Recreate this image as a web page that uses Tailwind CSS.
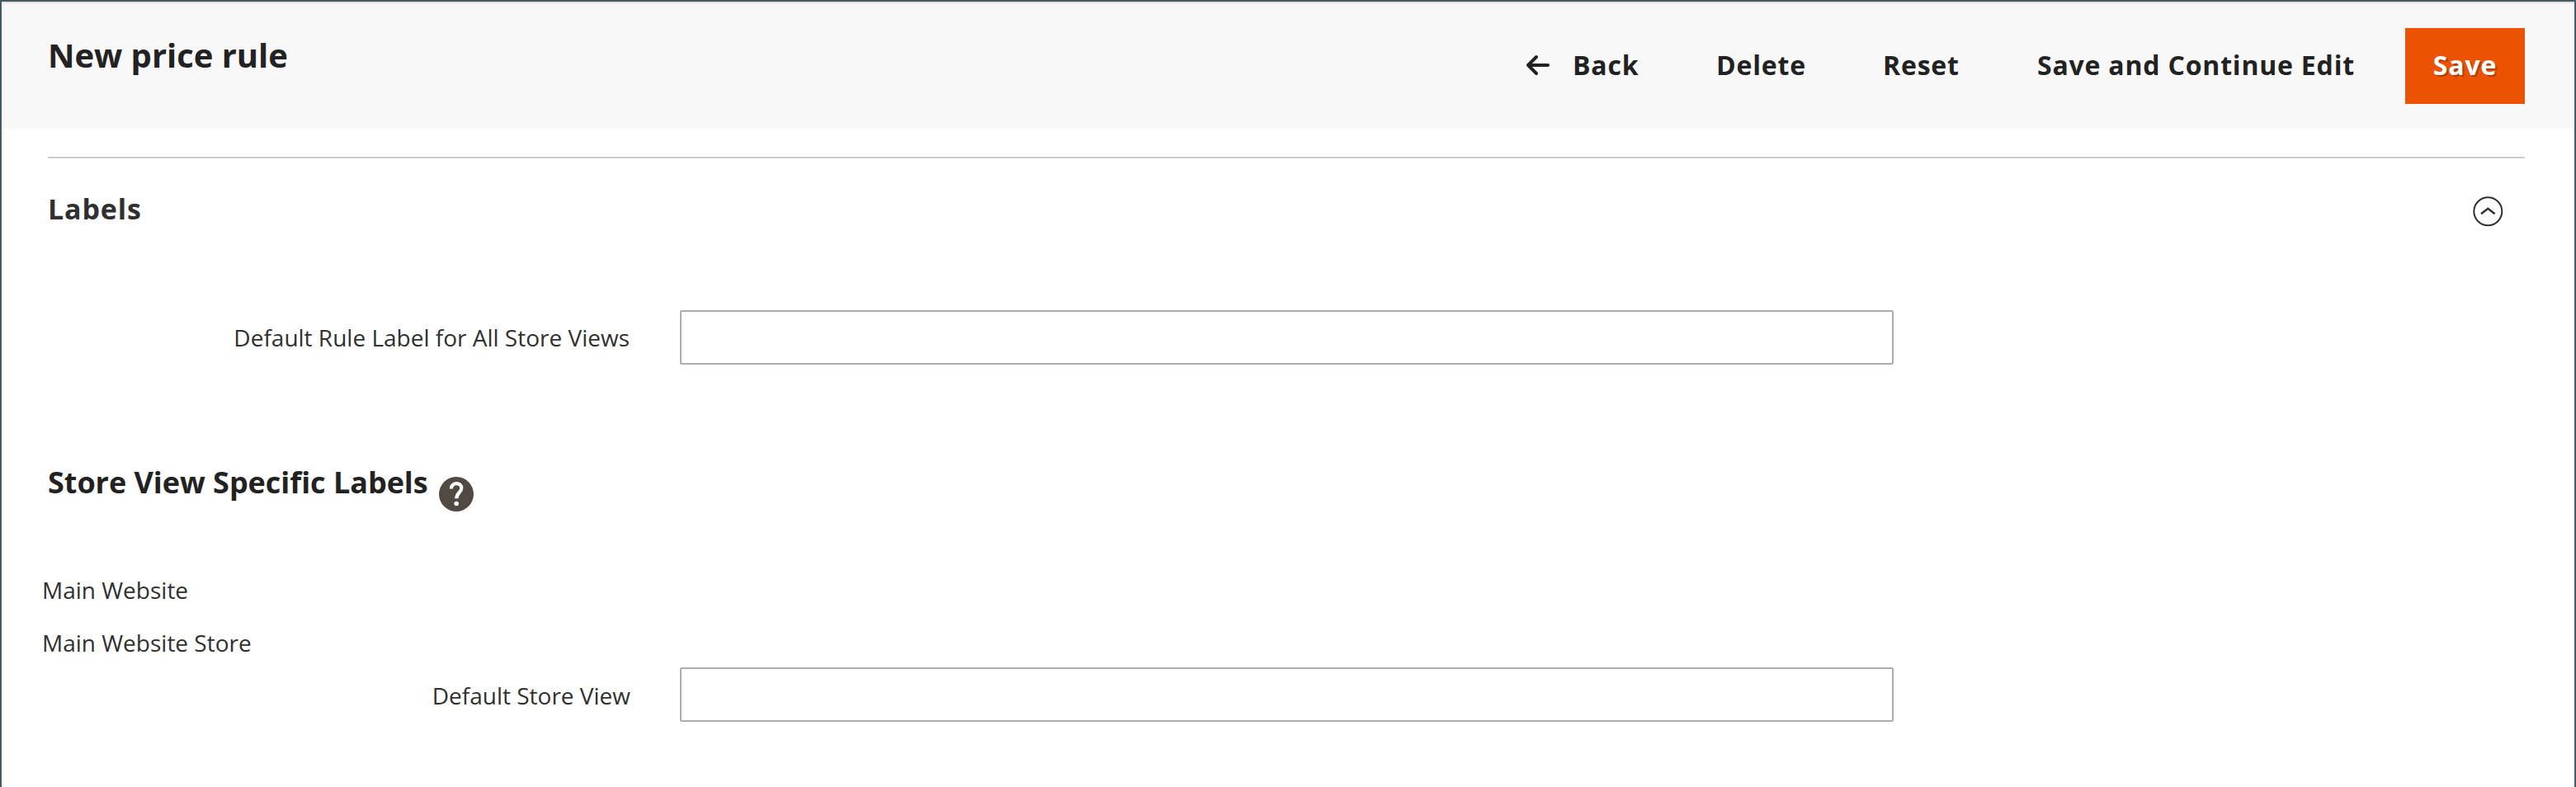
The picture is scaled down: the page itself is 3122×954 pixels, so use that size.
<!DOCTYPE html>
<html lang="en">
<head>
<meta charset="utf-8">
<title>New price rule</title>
<script src="https://cdn.jsdelivr.net/npm/@tailwindcss/browser@4"></script>
</head>
<body class="bg-white">
<div class="h-[954px] w-[3122px] overflow-hidden border-x-2 border-t-2 border-[#465a64] bg-white font-['Open_Sans',sans-serif] text-[28px] leading-[40px] text-[#303030]">
  <header class="flex h-[154px] items-start justify-between border-t-2 border-[#e3e3e3] bg-[#f8f8f8] pl-14 pr-[60px] text-[#222]">
    <h1 class="mt-[39px] text-[40px] font-bold leading-[48px] tracking-[-0.04px] whitespace-nowrap">New price rule</h1>
    <nav class="mt-[30px] flex h-[92px] text-[32px] font-bold leading-[44px] tracking-[0.025em] whitespace-nowrap">
      <button class="flex w-[174px] items-start pt-[23px]">
        <svg class="mt-2 mr-[27px] h-7 w-[30px] shrink-0" viewBox="0 0 30 28" fill="none" stroke="#222" stroke-width="4" stroke-linecap="round" stroke-linejoin="round"><path d="M13 4L3 14L13 24M3 14H27"/></svg>
        <span>Back</span>
      </button>
      <button class="flex w-[202px] items-start pl-[57px] pt-[23px]">Delete</button>
      <button class="flex w-[187px] items-start pl-[57px] pt-[23px]">Reset</button>
      <button class="flex w-[503px] items-start pl-[57px] pt-[23px]">Save and Continue Edit</button>
      <button class="flex w-[145px] items-start justify-center bg-[#eb5202] pt-[23px] text-white [text-shadow:2px_2px_0_rgba(0,0,0,0.25)]">Save</button>
    </nav>
  </header>
  <main class="pt-[34px]">
    <section class="ml-14 mr-[60px] flex h-[186px] items-start justify-between border-t-2 border-[#ccc] pr-[26px]">
      <h2 class="mt-[38px] text-[34px] font-bold leading-[46px] tracking-[0.025em]">Labels</h2>
      <svg class="mt-[45px] h-[38px] w-[38px]" viewBox="0 0 38 38" fill="none" stroke="#303030"><circle cx="19.300" cy="19.300" r="17" stroke-width="2"/><path d="M11 22.2L19.3 15.8L27.600 22.2" stroke-width="2.500"/></svg>
    </section>
    <label class="flex h-[66px] items-center">
      <span class="w-[761px] text-right">Default Rule Label for All Store Views</span>
      <input class="ml-[61px] h-[66px] w-[1471px] rounded-[2px] border-2 border-[#adadad] bg-white">
    </label>
    <div class="mt-[118px] flex h-[135px] items-start pl-14">
      <h3 class="text-[36px] font-bold leading-[50px] tracking-[-0.04px] text-[#222]">Store View Specific Labels</h3>
      <svg class="mt-[17px] ml-3 h-11 w-11" viewBox="0 0 44 44" fill="none"><circle cx="22" cy="22" r="21" fill="#514943"/><path d="M15.800 15.500C16.300 6.800 28.500 7.200 28.300 14.800C28.100 20 22.300 20.200 22.300 27.200" stroke="#fff" stroke-width="4.200"/><circle cx="22.200" cy="33.500" r="2.800" fill="#fff"/></svg>
    </div>
    <p class="h-16 pl-[49px]">Main Website</p>
    <p class="h-[50px] pl-[49px]">Main Website Store</p>
    <label class="flex h-[66px] items-center">
      <span class="w-[762px] pt-0.5 text-right">Default Store View</span>
      <input class="ml-[60px] h-[66px] w-[1471px] rounded-[2px] border-2 border-[#adadad] bg-white">
    </label>
  </main>
</div>
</body>
</html>
